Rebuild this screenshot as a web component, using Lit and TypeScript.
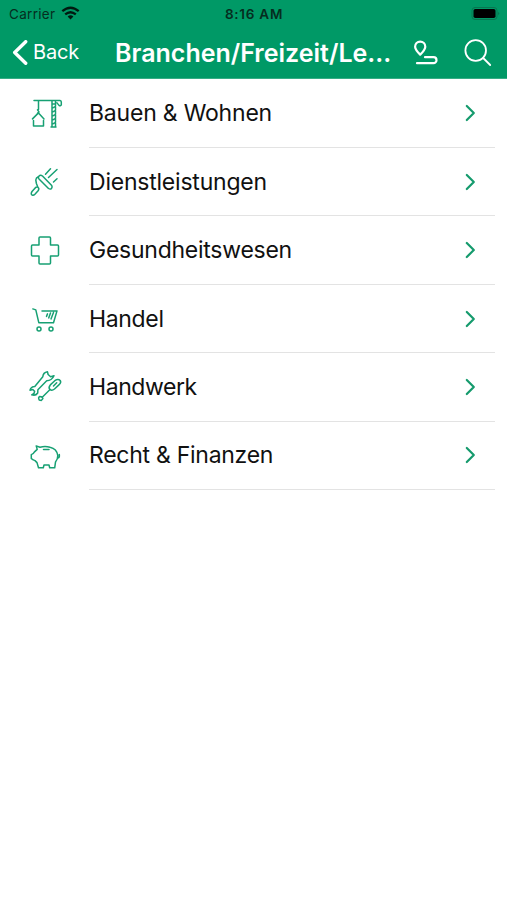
import { LitElement, html, svg, css } from "lit";
import { customElement } from "lit/decorators.js";

const rows = [
  {
    label: "Bauen & Wohnen", spacing: "-0.2px", box: "0 -1.4 60 50",
    icon: svg`<path d="M14 10H40M18.500 10v9M17.500 19.500l1.500 2-1.500 1.500M12.500 28.500l6-6 5.500 6M13.500 30v5.500h10v-5.500M32 10v26.500M35.500 10v26.500M32 13.500h3.500M32 18l3.500-2M32 22l3.500-2M32 26l3.500-2M32 30l3.500-2M32 34l3.500-2M31 36.500h5M40 10q1.300.2 1.300 1.500v3q-.8 1.500-2.300.5l-2-2.500"/>`,
  },
  {
    label: "Dienstleistungen", spacing: "-0.22px", box: "0 -1 60 50",
    icon: svg`<path d="M19 21l9.500 9.500q1.800 1.200 3 0 1.200-1.500.2-3L22.500 18q-2-1.600-3.500 0-1.300 1.500 0 3zM18.300 18.800q-2.300 1-2.500 3.200l.6 3.500 1.400 3.500M18.200 29.500q-1.500-1-3 .4L12 33.500q-1.600 2.600.2 3.500 1.400.5 2.700-.8l3.200-3.500q1.400-2 .1-3.200zM25.500 16.200l5-5.400M28.500 19.500l8.500-8M33.500 24l3.500-3.200"/>`,
  },
  {
    label: "Gesundheitswesen", spacing: "-0.25px", box: "0 -.6 60 50",
    icon: svg`<path d="M20 10.500h9.500q1 0 1 1v7H37.500q1 0 1 1v9q0 1-1 1h-7V36.500q0 1-1 1H20q-1 0-1-1v-7h-6.500q-1 0-1-1v-9q0-1 1-1H19v-7q0-1 1-1z"/>`,
  },
  {
    label: "Handel", spacing: "-0.34px", box: "0 -.4 60 50",
    icon: svg`<path d="M12.800 14.500l3 1 3 12.800h14.700l3.500-11.800H22M26.500 22l1-2.500M28.700 23.500l1.800-5M31 24.500l2.500-6.500"/><circle cx="19" cy="34.500" r="2"/><circle cx="31" cy="34.500" r="2"/>`,
  },
  {
    label: "Handwerk", spacing: "-0.42px", box: "0 0 60 50",
    icon: svg`<path d="M27.500 9.800q-4.400.7-4.700 5L14.800 24.500q-3.900.2-4.800 3.700l2.800-.7 1.800 1.700-.6 2.300-2.300 1.300q4 1.300 6-1.800l.2-3.300L26.700 18.800q5 0 7.300-5l-3.400.9-2.500-2.200z"/><path d="M40.200 18.500q-2.200-2.200-5.400.2l-4.500 4.200q-2.200 2.600-.4 4.500 1.900 1.700 4.600-.4l4.400-4.100q2.700-2.300 1.300-4.400zM36.700 20.800l-3.200 3.200M29.800 27.800L22.500 35M19.500 34.500l2 .2 1.400 1.800-1.500 1.900-2.300-.5-.5-2z"/>`,
  },
  {
    label: "Recht & Finanzen", spacing: "-0.27px", box: "0 .4 60 50",
    icon: svg`<path d="M16.200 15.300l3.800 1.400q5-1.400 10 0 6.800 1.500 7.800 8.300 0 4-2.300 6.500l-.8 5.700h-5l-.7-2.800h-5l-.7 2.800h-4.800l-1.500-5.200-2-2q-2.600-.8-3.700-2v-4q2.300-.8 3.200-2.700l2.700-2.500zM23.500 18.800h5.500M38 27.500q1.800-.2 1.300-3.700"/>`,
  },
];

@customElement("app-root")
class AppRoot extends LitElement {
  static styles = css`
    :host {
      display: block;
      height: 900px;
      background: #fff;
      font-family: Inter, "Liberation Sans", sans-serif;
      overflow: hidden;
    }
    svg { display: block; fill: none; stroke: currentColor; stroke-linecap: round; stroke-linejoin: round; }
    header { height: 79px; box-sizing: border-box; background: #009966; border-bottom: 1px solid #36ad85; }
    .status { display: grid; grid-template-columns: 1fr auto 1fr; align-items: center; height: 27px; padding: 0 6px 0 9px; color: #052d20; font-size: 13.5px; }
    .carrier { display: flex; align-items: center; gap: 6px; letter-spacing: 0.3px; }
    .carrier svg { color: #001a10; stroke-linecap: butt; }
    .time { font-weight: 600; letter-spacing: 0.75px; margin-left: -2px; }
    .battery { justify-self: end; }
    .nav { display: flex; align-items: center; height: 51px; color: #fff; }
    .back { display: flex; align-items: center; width: 115px; box-sizing: border-box; padding-left: 12px; gap: 5px; font-size: 20px; letter-spacing: -0.2px; }
    .back span { margin-top: -1px; }
    .title { width: 277px; font-size: 25px; font-weight: 600; letter-spacing: 0; white-space: nowrap; }
    .route { margin-left: 20px; }
    .search { margin-left: 24px; }
    main { padding-top: 0.7px; }
    .row { display: flex; height: 68.4px; padding-right: 12px; }
    .icon { width: 69px; margin-left: 20px; display: flex; align-items: center; color: #17a073; }
    .body { flex: 1; display: flex; align-items: center; justify-content: space-between; border-bottom: 1px solid #e3e3e3; padding-right: 19px; font-size: 23px; color: #111; }
    .body svg { color: #159b6d; }
  `;

  render() {
    return html`
      <header>
        <div class="status">
          <div class="carrier">
            <span>Carrier</span>
            <svg width="19" height="15" viewBox="0 0 19 15" stroke-width="2.300">
              <path d="M1.300 5.200q8.200-7 16.400 0M4.200 8.400q5.300-4.400 10.600 0" />
              <path d="M6.600 10.400q2.900-2.200 5.800 0L9.500 13.500z" fill="currentColor" stroke="none" />
            </svg>
          </div>
          <div class="time">8:16 AM</div>
          <svg class="battery" width="30" height="14" viewBox="0 0 30 14">
            <rect x="1" y=".5" width="25" height="12" rx="3" stroke="#087650" />
            <rect x="2.500" y="2" width="22" height="9" rx="1.800" fill="#000" stroke="none" />
            <path d="M27.500 4.700q1.500 1.800 0 3.600z" fill="#075d40" stroke="none" />
          </svg>
        </div>
        <div class="nav">
          <div class="back">
            <svg width="16" height="26" viewBox="0 0 16 26" stroke-width="3.400"><path d="M13.700 1.700L2.700 12.500l11 10.800" /></svg>
            <span>Back</span>
          </div>
          <div class="title">Branchen/Freizeit/Le...</div>
          <svg class="route" width="28" height="28" viewBox="0 0 28 28" stroke-width="2.200">
            <path d="M8.200 15.600Q3.100 10.500 3.100 7.700a5.100 5.100 0 0 1 10.200 0q0 2.800-5.100 7.900z" />
            <path d="M13 18.200h8.500a3 3 0 0 1 0 6H5" />
          </svg>
          <svg class="search" width="28" height="28" viewBox="0 0 28 28" stroke-width="1.800">
            <circle cx="11.700" cy="11.500" r="10.300" /><path d="M19.200 19l7 7" />
          </svg>
        </div>
      </header>
      <main>
        ${rows.map((r) => html`
          <div class="row">
            <div class="icon"><svg width="60" height="50" viewBox=${r.box} stroke-width="1.500">${r.icon}</svg></div>
            <div class="body">
              <span style="letter-spacing:${r.spacing}">${r.label}</span>
              <svg width="11" height="18" viewBox="0 0 11 18" stroke-width="2.200"><path d="M1.800 2l7 7-7 7" /></svg>
            </div>
          </div>`)}
      </main>
    `;
  }
}
